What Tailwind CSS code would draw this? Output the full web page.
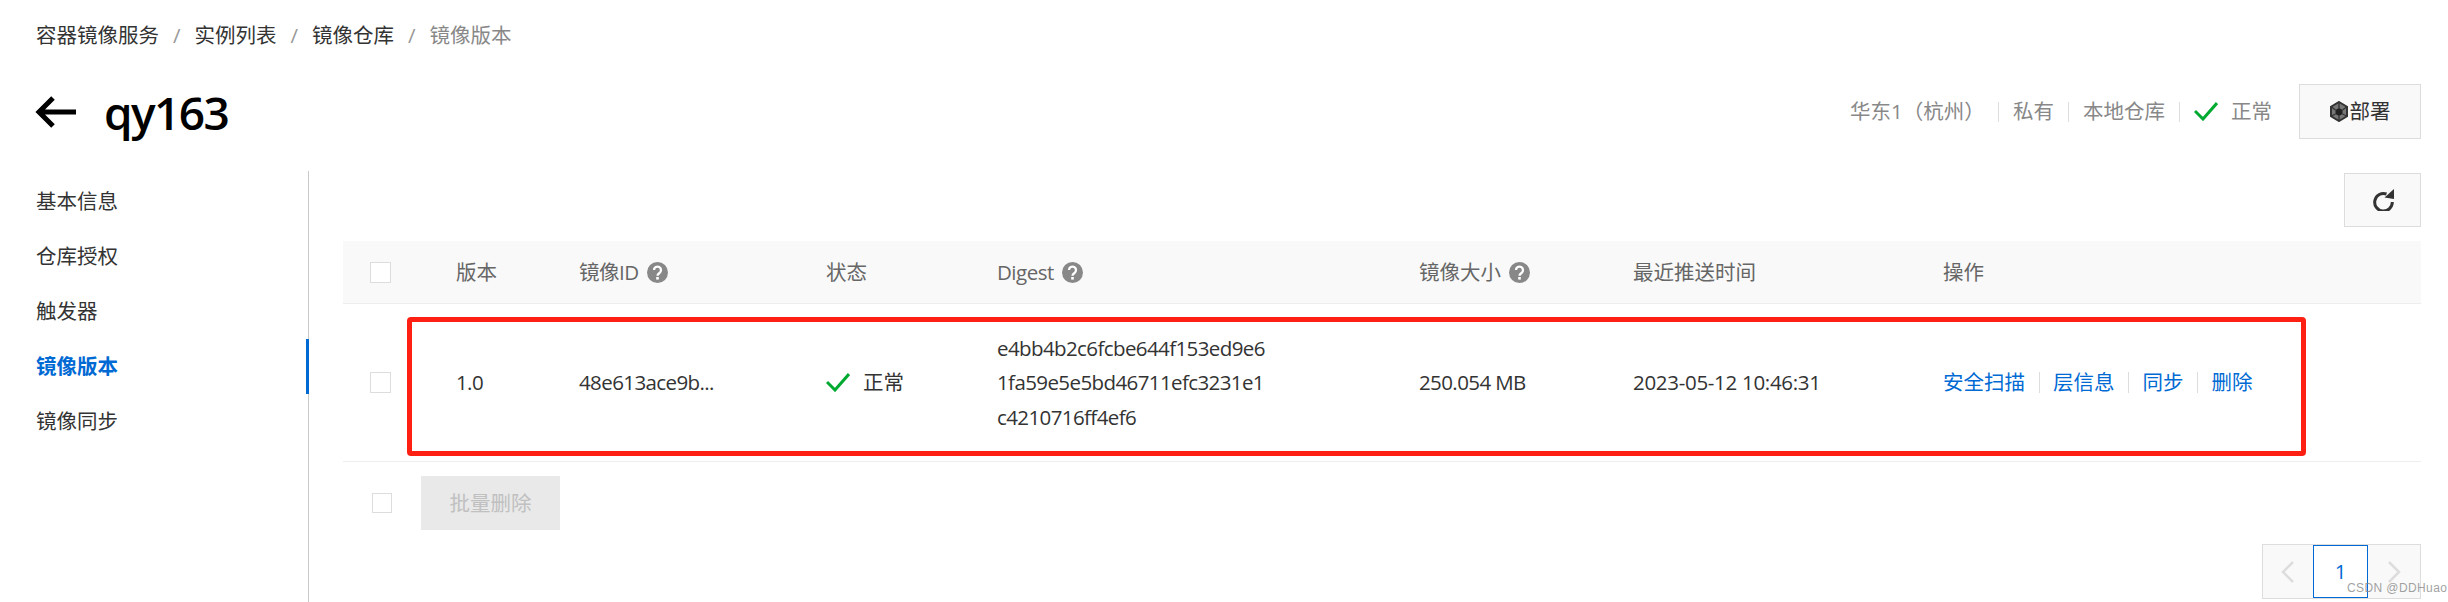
<!DOCTYPE html>
<html lang="zh">
<head>
<meta charset="utf-8">
<title>镜像版本</title>
<script src="https://cdn.jsdelivr.net/npm/@tailwindcss/browser@4"></script>
</head>
<body class="bg-white">
<div class="relative h-[602px] w-[2448px] overflow-hidden font-['Open_Sans','Noto_Sans_CJK_SC',sans-serif] text-[20.5px] text-[#333]">
  <div class="flex h-[70px] items-center pl-[36px] text-[#333]">
    <span>容器镜像服务</span><span class="mx-[14px] text-[#999]">/</span><span>实例列表</span><span class="mx-[14px] text-[#999]">/</span><span>镜像仓库</span><span class="mx-[14px] text-[#999]">/</span><span class="text-[#888]">镜像版本</span>
  </div>
  <div class="mt-[14px] flex h-[55px] items-center justify-between pr-[27px] pl-[35px]">
    <div class="flex items-center gap-[28px]">
      <svg class="h-[32px] w-[41px]" viewBox="0 0 41 32" fill="none" stroke="#000" stroke-width="5"><path d="M41 16H4M18 2 4 16l14 14"/></svg>
      <span class="text-[46px] leading-none font-semibold tracking-[-1.6px] text-black">qy163</span>
    </div>
    <div class="flex items-center text-[#888]">
      <span class="w-[148px]">华东1（杭州）</span>
      <span class="h-[20px] w-px bg-[#ddd]"></span>
      <span class="px-[14px]">私有</span>
      <span class="h-[20px] w-px bg-[#ddd]"></span>
      <span class="px-[14px]">本地仓库</span>
      <span class="h-[20px] w-px bg-[#ddd]"></span>
      <svg class="mr-[13px] ml-[14px] h-[19px] w-[24px]" viewBox="0 0 24 19" fill="none" stroke="#00a92f" stroke-width="3"><path d="M1 9l8 8L23 1"/></svg>
      <span>正常</span>
      <button class="ml-[27px] flex h-[55px] w-[122px] items-center justify-center gap-[2px] border border-[#ddd] bg-[#f9f9f9] text-[#333]">
        <svg class="h-[21px] w-[18px]" viewBox="0 0 18 21"><path d="M9 1l8 4.700v9.600L9 20l-8-4.700V5.700z" fill="#777" stroke="#333" stroke-width="2"/><path d="M9 7l3.500 2v4L9 15l-3.500-2V9z" fill="#222"/><path d="M9 2v5M1.500 6l4 3M16.500 6l-4 3M1.500 15l4-2M16.500 15l-4-2M9 15v5" stroke="#333" stroke-width="1.300"/></svg>
        <span>部署</span>
      </button>
    </div>
  </div>
  <div class="mt-[32px] flex h-[431px]">
    <nav class="flex h-full w-[309px] shrink-0 flex-col border-r border-[#c9c9c9] pt-[3px] text-[#333]">
      <a class="flex h-[55px] items-center pl-[36px]">基本信息</a>
      <a class="flex h-[55px] items-center pl-[36px]">仓库授权</a>
      <a class="flex h-[55px] items-center pl-[36px]">触发器</a>
      <a class="-mr-px flex h-[55px] items-center border-r-[3px] border-[#006ad4] pl-[36px] font-bold text-[#006ad4]">镜像版本</a>
      <a class="flex h-[55px] items-center pl-[36px]">镜像同步</a>
    </nav>
    <main class="flex-1 pr-[27px] pl-[34px]">
      <div class="flex h-[70px] justify-end pt-[2px]">
        <button class="flex h-[54px] w-[77px] items-center justify-center border border-[#ddd] bg-[#f9f9f9]">
          <svg class="h-[22px] w-[22px]" viewBox="0 0 22 22" fill="none"><path d="M14.500 5a8.800 8.800 0 1 0 5.800 8" stroke="#333" stroke-width="3"/><path d="M12.500 8.500 22 0v10z" fill="#333"/></svg>
        </button>
      </div>
      <div class="grid h-[63px] grid-cols-[113px_123px_247px_171px_422px_214px_310px_1fr] items-center border-b border-[#eee] bg-[#f9f9f9] text-[#666]">
        <span class="ml-[27px] h-[21px] w-[21px] border border-[#ddd] bg-white"></span>
        <span>版本</span>
        <span class="flex items-center gap-[8px]"><span class="tracking-[-0.5px]">镜像ID</span><svg class="h-[21px] w-[21px]" viewBox="0 0 21 21"><circle cx="10.500" cy="10.500" r="10.500" fill="#888"/><path d="M7 8a3.500 3.500 0 1 1 5.500 3c-1.300.9-2 1.400-2 2.800" fill="none" stroke="#fff" stroke-width="2.300"/><rect x="9.200" y="15" width="2.600" height="2.600" fill="#fff"/></svg></span>
        <span>状态</span>
        <span class="flex items-center gap-[8px]"><span class="tracking-[-0.5px]">Digest</span><svg class="h-[21px] w-[21px]" viewBox="0 0 21 21"><circle cx="10.500" cy="10.500" r="10.500" fill="#888"/><path d="M7 8a3.500 3.500 0 1 1 5.500 3c-1.300.9-2 1.400-2 2.800" fill="none" stroke="#fff" stroke-width="2.300"/><rect x="9.200" y="15" width="2.600" height="2.600" fill="#fff"/></svg></span>
        <span class="flex items-center gap-[8px]">镜像大小<svg class="h-[21px] w-[21px]" viewBox="0 0 21 21"><circle cx="10.500" cy="10.500" r="10.500" fill="#888"/><path d="M7 8a3.500 3.500 0 1 1 5.500 3c-1.300.9-2 1.400-2 2.800" fill="none" stroke="#fff" stroke-width="2.300"/><rect x="9.200" y="15" width="2.600" height="2.600" fill="#fff"/></svg></span>
        <span>最近推送时间</span>
        <span>操作</span>
      </div>
      <div class="relative grid h-[158px] grid-cols-[113px_123px_247px_171px_422px_214px_310px_1fr] items-center border-b border-[#eee] text-[#333]">
        <span class="ml-[27px] h-[21px] w-[21px] border border-[#ddd] bg-white"></span>
        <span class="tracking-[-0.6px]">1.0</span>
        <span class="tracking-[-0.6px]">48e613ace9b...</span>
        <span class="flex items-center gap-[13px]"><svg class="h-[19px] w-[24px]" viewBox="0 0 24 19" fill="none" stroke="#00a92f" stroke-width="3"><path d="M1 9l8 8L23 1"/></svg>正常</span>
        <span class="leading-[34.500px] tracking-[-0.6px]">e4bb4b2c6fcbe644f153ed9e6<br>1fa59e5e5bd46711efc3231e1<br>c4210716ff4ef6</span>
        <span class="tracking-[-0.6px]">250.054 MB</span>
        <span class="tracking-[-0.3px]">2023-05-12 10:46:31</span>
        <span class="flex items-center text-[#006ad4]">
          <a>安全扫描</a><i class="mx-[13.500px] h-[21px] w-px bg-[#ddd]"></i><a>层信息</a><i class="mx-[13.500px] h-[21px] w-px bg-[#ddd]"></i><a>同步</a><i class="mx-[13.500px] h-[21px] w-px bg-[#ddd]"></i><a>删除</a>
        </span>
        <div class="pointer-events-none absolute top-[13px] left-[64px] h-[139px] w-[1899px] rounded-[4px] border-[5px] border-[#ff2014]"></div>
      </div>
      <div class="flex h-[82px] items-center pl-[29px]">
        <span class="h-[20px] w-[20px] border border-[#ddd] bg-white"></span>
        <button class="ml-[29px] h-[54px] w-[139px] bg-[#e9e9e9] text-[#c0c0c0]">批量删除</button>
      </div>
      <div class="flex h-[14px] justify-end">
        <div class="flex h-[55px] w-[159px] border border-[#ddd] bg-[#f9f9f9]">
          <span class="flex w-[50px] items-center justify-center"><svg class="h-[22px] w-[14px]" viewBox="0 0 14 22" fill="none" stroke="#ddd" stroke-width="2.500"><path d="M12 1 2 11l10 10"/></svg></span>
          <span class="flex w-[55px] items-center justify-center border border-[#006ad4] bg-white text-[#006ad4]">1</span>
          <span class="flex flex-1 items-center justify-center"><svg class="h-[22px] w-[14px]" viewBox="0 0 14 22" fill="none" stroke="#ddd" stroke-width="2.500"><path d="M2 1l10 10L2 21"/></svg></span>
        </div>
      </div>
    </main>
  </div>
  <span class="absolute top-[580px] left-[2347px] font-['Liberation_Sans',sans-serif] text-[12px] leading-[16px] tracking-[0.4px] text-[#888]/80">CSDN @DDHuao</span>
</div>
</body>
</html>
